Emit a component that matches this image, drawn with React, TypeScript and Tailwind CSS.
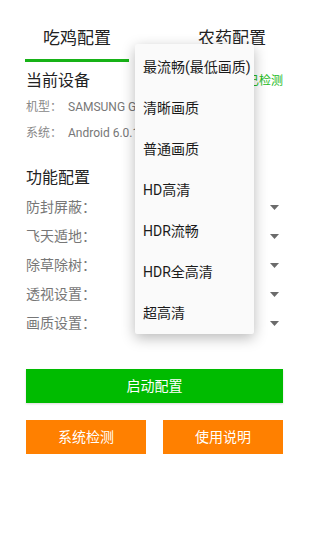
import React from "react";

const font = { fontFamily: 'Roboto, "Noto Sans CJK SC", sans-serif' };

const settings = ["防封屏蔽：", "飞天遁地：", "除草除树：", "透视设置：", "画质设置："];

const qualityOptions = [
  "最流畅(最低画质)",
  "清晰画质",
  "普通画质",
  "HD高清",
  "HDR流畅",
  "HDR全高清",
  "超高清",
];

function Caret() {
  return (
    <svg width="9" height="5" viewBox="0 0 9 5">
      <path d="M0 0H9L4.5 5Z" fill="#6b6b6b" />
    </svg>
  );
}

export default function App() {
  return (
    <div className="relative w-[309px] h-[550px] bg-white overflow-hidden" style={font}>
      {/* tabs */}
      <div className="flex pl-[25px] pt-[27px]">
        <div className="w-[104px] flex flex-col items-center">
          <div className="h-[22px] leading-[22px] text-[17px] text-[#222]">吃鸡配置</div>
          <div className="mt-[10px] h-[3px] w-full bg-[#17b217]" />
        </div>
        <div className="w-[104px] ml-[51px] flex flex-col items-center">
          <div className="h-[22px] leading-[22px] text-[17px] text-[#222]">农药配置</div>
        </div>
      </div>

      <div className="px-[26px]">
        {/* device info */}
        <div className="mt-[8px] flex items-center justify-between h-[22px]">
          <span className="text-[16px] text-[#222] leading-[22px]">当前设备</span>
          <span className="text-[12px] text-[#22bb22]">已检测</span>
        </div>
        <div className="mt-[6px] flex h-[18px] items-center text-[12px]">
          <span className="w-[42px] text-[#888]">机型：</span>
          <span className="text-[#777]">SAMSUNG G9350</span>
        </div>
        <div className="mt-[8px] flex h-[18px] items-center text-[12px]">
          <span className="w-[42px] text-[#888]">系统：</span>
          <span className="text-[#777]">Android 6.0.1</span>
        </div>

        {/* feature settings */}
        <div className="mt-[25px] h-[22px] leading-[22px] text-[16px] text-[#222]">功能配置</div>
        <div className="mt-[4px] flex flex-col">
          {settings.map((s) => (
            <div key={s} className="h-[29px] flex items-center justify-between pr-[4px]">
              <span className="text-[14px] text-[#777]">{s}</span>
              <Caret />
            </div>
          ))}
        </div>

        {/* buttons */}
        <button className="mt-[31px] w-full h-[34px] bg-[#00bb00] text-white text-[14px] shadow-[0_1px_2px_rgba(0,0,0,0.15)]">
          启动配置
        </button>
        <div className="mt-[17px] flex gap-[17px]">
          <button className="flex-1 h-[34px] bg-[#ff8000] text-white text-[14px]">系统检测</button>
          <button className="flex-1 h-[34px] bg-[#ff8000] text-white text-[14px]">使用说明</button>
        </div>
      </div>

      {/* dropdown menu */}
      <div className="absolute left-[135px] top-[44px] w-[119px] pt-[3px] bg-[#fafafa] rounded-[2px] shadow-[0_4px_14px_rgba(0,0,0,0.28)]">
        {qualityOptions.map((o) => (
          <div key={o} className="h-[41px] flex items-center pl-[8px] text-[14px] text-[#1a1a1a]">
            {o}
          </div>
        ))}
      </div>
    </div>
  );
}
